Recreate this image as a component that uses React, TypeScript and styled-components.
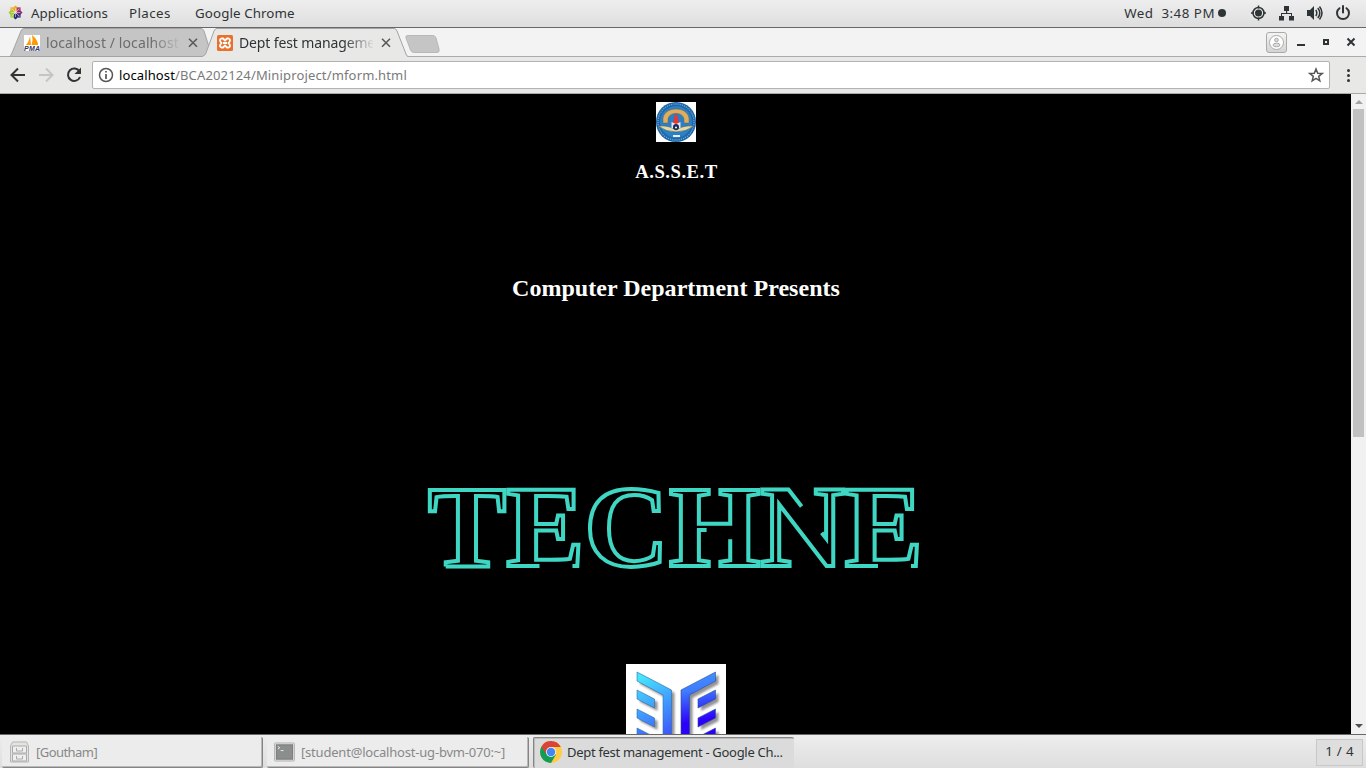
import React from "react";
import styled, { createGlobalStyle } from "styled-components";

const GlobalStyle = createGlobalStyle`
  *{box-sizing:border-box}
  html,body{margin:0;background:#000;overflow:hidden}
  body{font-family:"Noto Sans","Open Sans",sans-serif;color:#2e3436}
  svg{display:block;flex:none}
`;
const Screen = styled.div`width:1366px;height:768px;display:flex;flex-direction:column;overflow:hidden;`;
const Label = styled.span<{ $size?: number; $track?: number; $color?: string }>`
  white-space:pre;font-size:${p => p.$size ?? 13}px;letter-spacing:${p => p.$track ?? 0}px;color:${p => p.$color ?? "#2e3436"};
`;

const TopBar = styled.header`height:28px;flex:none;display:flex;align-items:center;padding:0 15px 2px 8px;background:linear-gradient(#eeeeee,#dedede);border-bottom:1px solid #686868;`;
const Menus = styled.nav`display:flex;align-items:center;margin-left:8px;`;
const MenuItem = styled(Label)<{ $w: number }>`width:${p => p.$w}px;`;
const Status = styled.div`display:flex;align-items:center;margin-left:auto;`;
const Dot = styled.i`width:8px;height:8px;border-radius:50%;background:#2e3436;margin:0 25px 0 3px;`;
const Tray = styled.div`display:flex;align-items:center;gap:12px;`;

const TabStrip = styled.div`height:29px;flex:none;display:flex;background:#f3f3f3;border-bottom:1px solid #aaa;`;
const Tabs = styled.div`display:flex;height:29px;padding-left:9px;`;
const Tab = styled.div<{ $active?: boolean }>`
  position:relative;width:${p => p.$active ? 206 : 200}px;margin-left:${p => p.$active ? -7 : 0}px;height:29px;
  display:flex;align-items:center;padding:1px 0 0 15px;z-index:${p => p.$active ? 2 : 1};
`;
const TabShape = styled.svg`position:absolute;left:0;top:0;z-index:-1;`;
const TabTitle = styled.div`width:134px;margin:0 8px 1px 6px;overflow:hidden;line-height:24px;-webkit-mask-image:linear-gradient(90deg,#000 105px,transparent 136px);`;
const NewTab = styled.svg`margin:7px 0 0 -3px;`;
const WindowButtons = styled.div`display:flex;align-items:center;margin-left:auto;padding-right:10px;`;
const UserButton = styled.div`width:21px;height:21px;border:1px solid #aaa;border-radius:3px;background:linear-gradient(#f4f4f2,#d4d4d0);display:flex;align-items:center;justify-content:center;margin-right:9px;`;

const Toolbar = styled.div`height:37px;flex:none;display:flex;align-items:center;background:#e8e8e7;border-bottom:1px solid #aaa;padding:0 10px 0 9px;`;
const NavButtons = styled.div`display:flex;gap:10px;margin-right:9px;`;
const AddressBar = styled.div`width:1238px;height:28px;display:flex;align-items:center;background:#fff;border:1px solid #b2b2b2;border-radius:2px;padding:0 5px;`;
const Url = styled.div`margin:0 auto 2px 5px;line-height:18px;`;
const Kebab = styled.div`display:flex;flex-direction:column;gap:2px;margin-left:17px;i{width:3px;height:3px;border-radius:50%;background:#333}`;

const Viewport = styled.main`height:640px;flex:none;display:flex;background:#000;`;
const Page = styled.div`width:1351px;height:640px;overflow:hidden;display:flex;flex-direction:column;align-items:center;padding-top:8px;font-family:"Liberation Serif",serif;color:#fff;`;
const Asset = styled.h3`margin:19px 0 0;padding-left:2px;font-size:18.72px;line-height:22px;letter-spacing:.5px;`;
const Presents = styled.h2`margin:91px 0 0;padding-left:1px;font-size:24px;line-height:28px;letter-spacing:.03px;`;
const Title = styled.svg`margin-top:161px;overflow:visible;`;
const Logo = styled.svg`margin-top:81px;`;

const Scrollbar = styled.div`width:15px;background:#f1f1f1;display:flex;flex-direction:column;align-items:center;`;
const Arrow = styled.div<{ $down?: boolean }>`
  height:15px;width:15px;display:flex;align-items:center;justify-content:center;
  &::after{content:"";border:4px solid transparent;border-${p => p.$down ? "top" : "bottom"}-color:${p => p.$down ? "#505050" : "#a3a3a3"};margin-${p => p.$down ? "top" : "bottom"}:${p => p.$down ? 2 : 4}px;}
`;
const Thumb = styled.div`width:11px;height:328px;background:#c1c1c1;margin-bottom:auto;`;

const Taskbar = styled.footer`height:34px;flex:none;display:flex;align-items:center;background:linear-gradient(#ededed,#dedede);border-top:1px solid #686868;padding:1px 3px 0 2px;`;
const Task = styled.div<{ $active?: boolean; $w: number }>`
  width:${p => p.$w}px;height:31px;margin-right:4px;display:flex;align-items:center;gap:${p => p.$active ? 5 : 6}px;
  padding:0 0 ${p => p.$active ? 2 : 0}px ${p => p.$active ? 6 : 7}px;
  background:${p => p.$active ? "#dbdbdb" : "#ececec"};
  border-style:solid;border-width:${p => p.$active ? "1px 0 0 1px" : "0 1px 1px 0"};border-color:#858585;border-radius:2px;
  box-shadow:${p => p.$active ? "inset 1px 1px #bcbcbc" : "inset -1px -1px #b9b9b9"};
`;
const Pager = styled.div`margin-left:auto;width:47px;height:27px;border:1px solid #c8c8c8;background:#dedede;display:flex;align-items:center;justify-content:center;padding-bottom:2px;`;

const CloseIcon = () => <svg width="10" height="10" viewBox="0 0 10 10" stroke="#5a5a5a" strokeWidth="1.6"><path d="M1 .8l8 8M9 .8l-8 8" /></svg>;

function ActivitiesIcon() {
  const colors = ["#efa724", "#932279", "#262577", "#9ccd2a"];
  return <svg width="15" height="15" viewBox="0 0 16 16">
    {[0, 90, 180, 270].map((a, i) => <g key={a} transform={`rotate(${a} 8 8)`} fill={colors[i]}>
      <path d="M8 .5l2 2v3.500L8 7.500 6 6V2.500z" /><path d="M9.500 6.500V2.500H13.500v4z" fill={colors[(i + 1) % 4]} opacity=".85" />
    </g>)}
    <path d="M8 3v10M3 8h10M4 4l8 8M12 4l-8 8" stroke="#eee" strokeWidth=".6" />
  </svg>;
}
function TrayIcons() {
  return <Tray>
    <svg width="16" height="16" viewBox="0 0 16 16"><circle cx="7.500" cy="8" r="5.500" fill="none" stroke="#2e3436" strokeWidth="1.5" /><circle cx="7.500" cy="8" r="3.500" fill="#2e3436" /><path d="M7.500 .5v3M7.500 12.500v3M0 8h3M12 8h3" stroke="#2e3436" strokeWidth="1.500" /></svg>
    <svg width="16" height="16" viewBox="0 0 16 16" fill="#2e3436"><path d="M5 1h5v5H8.200v2H13v3h2v4.500h-5V11h2V9H3v2h2v4.500H0V11h2V8h5V6H5z" /></svg>
    <svg width="16" height="16" viewBox="0 0 16 16"><path d="M0 5h3l4-4v14l-4-4H0z" fill="#2e3436" /><path d="M8.800 5q2 3 0 6M10.800 3q4 5 0 10M12.500 1.500q5 6.500 0 13" fill="none" stroke="#2e3436" strokeWidth="1.500" /></svg>
    <svg width="16" height="16" viewBox="0 0 16 16" fill="none" stroke="#2e3436" strokeWidth="2" strokeLinecap="round"><path d="M8 1v6.500M4.500 3.200a6 6 0 1 0 7 0" /></svg>
  </Tray>;
}
function CollegeEmblem() {
  return <svg width="40" height="40" viewBox="0 0 40 40">
    <rect width="40" height="40" fill="#fff" />
    <circle cx="20" cy="20" r="20" fill="#1b65a8" /><circle cx="20" cy="20" r="18" fill="none" stroke="#6fa9d2" strokeWidth="1.300" strokeDasharray="1.200 1" />
    <circle cx="20" cy="20" r="16" fill="#2b7fc6" />
    <path d="M7 21V16C9 4 31 4 33 16v5h-5v-4C27 9.500 13 9.500 12 17v4z" fill="#dcae62" stroke="#795f3c" strokeWidth=".5" />
    <path d="M2 24q11-1 18 4 7-5 18-4-8 6-18 6T2 24z" fill="#e3d9a2" stroke="#34546b" strokeWidth=".6" />
    <path d="M17 22l1-6 2-5 2 5 1 6z" fill="#e7372f" /><path d="M15.500 20l4.500 2 4.500-2v6h-9z" fill="#e6e6ee" />
    <circle cx="20" cy="25" r="3" fill="#172960" /><circle cx="20" cy="25.500" r="1" fill="#fff" />
    <rect x="17" y="33" width="7" height="2" fill="#e5eef0" />
  </svg>;
}
function TechneLogo() {
  const left = "M11 8L45.500 26V100H37V31L11 17zM11 26l17.500 9v9L11 35zM11 45l17.500 9v9L11 54zM11 64l17.500 9v9L11 73z";
  const right = "M89.500 8L55 26V100h8.500V31l26-14zM89.500 26L72 35v9l17.500-9zM89.500 45L72 54v9l17.500-9zM89.500 64L72 73v9l17.500-9z";
  return <Logo width="100" height="100" viewBox="0 0 100 100">
    <defs>
      <linearGradient id="lg" gradientUnits="userSpaceOnUse" x1="11" y1="15" x2="47" y2="82"><stop stopColor="#45e5ff" /><stop offset="1" stopColor="#3a3cff" /></linearGradient>
      <linearGradient id="rg" gradientUnits="userSpaceOnUse" x1="72" y1="8" x2="80" y2="56"><stop stopColor="#4292ff" /><stop offset=".35" stopColor="#3f7cff" /><stop offset="1" stopColor="#2c00fa" /></linearGradient>
      <filter id="sh"><feGaussianBlur stdDeviation="1" /></filter>
    </defs>
    <rect width="100" height="100" fill="#fff" />
    <g transform="translate(3 3)" fill="#777" opacity=".8" filter="url(#sh)"><path d={left} /><path d={right} /></g>
    <path d={left} fill="url(#lg)" stroke="#326da0" strokeWidth=".6" /><path d={right} fill="url(#rg)" stroke="#294f92" strokeWidth=".6" />
  </Logo>;
}
function ChromeIcon() {
  return <svg width="22" height="22" viewBox="0 0 22 22">
    <circle cx="11" cy="11" r="11" fill="#fc4" />
    <path d="M11 11L1.500 5.500A11 11 0 0 0 11 22l5-8.500z" fill="#119d58" />
    <path d="M11 11v-5h9.800A11 11 0 0 0 1.500 5.500L6.300 13.500z" fill="#da4437" />
    <circle cx="11" cy="11" r="5" fill="#f5f5f5" /><circle cx="11" cy="11" r="4.200" fill="#4285f4" />
  </svg>;
}

export default function App() {
  return <Screen>
    <GlobalStyle />
    <TopBar>
      <ActivitiesIcon />
      <Menus>
        <MenuItem $w={98} $size={13.333} $track={0.03}>Applications</MenuItem>
        <MenuItem $w={66} $size={13.333} $track={0.4}>Places</MenuItem>
        <MenuItem $w={110} $size={13.333} $track={0.1}>Google Chrome</MenuItem>
      </Menus>
      <Status>
        <Label $size={13.333} $track={0.5}>Wed  3:48 PM</Label><Dot />
        <TrayIcons />
      </Status>
    </TopBar>
    <TabStrip>
      <Tabs>
        <Tab>
          <TabShape width="204" height="29" viewBox="0 0 204 29"><path d="M.5 28.500Q2 28 3 25L12 3Q13 .5 15 .5H192Q194 .5 195 3L203 28.500z" fill="#c5c5c5" stroke="#a3a3a3" /></TabShape>
          <svg width="16" height="16" viewBox="0 0 16 16"><rect width="16" height="16" fill="#fff" /><path d="M2 10Q5 7 6 1l1 9zM7.500 10Q9.500 5 8 0q6 5 6 10z" fill="#f90" /><text x="0" y="16" fontSize="7" fontWeight="700" fontStyle="italic" fill="#336" fontFamily="Liberation Sans" textLength="16">PMA</text></svg>
          <TabTitle><Label $size={14} $track={0.1} $color="#6c6c6c">localhost / localhost</Label></TabTitle>
          <CloseIcon />
        </Tab>
        <Tab $active>
          <TabShape width="206" height="29" viewBox="0 0 206 29"><path d="M0 28.500Q3 28 4 25L12 3Q13 .5 15 .5H192Q194 .5 195 3L204 26Q205 28.500 206 28.500V29H0z" fill="#e8e8e7" /><path d="M0 28.500Q3 28 4 25L12 3Q13 .5 15 .5H192Q194 .5 195 3L204 26Q205 28.500 206 28.500" fill="none" stroke="#a3a3a3" /></TabShape>
          <svg width="16" height="16" viewBox="0 0 16 16"><rect width="16" height="16" rx="1.500" fill="#e9712b" /><path d="M4.500 3.500H6L8 5.500l2-2h1.500q2.500 1 1 3.200L11.500 8l1 1.300q1.500 2.200-1 3.200H10l-2-2-2 2H4.500q-2.500-1-1-3.200L4.500 8l-1-1.300q-1.500-2.200 1-3.200zM6 8h4" fill="none" stroke="#fff" strokeWidth="1.800" /></svg>
          <TabTitle><Label $size={14} $track={-0.13}>Dept fest manageme</Label></TabTitle>
          <CloseIcon />
        </Tab>
        <NewTab width="38" height="19" viewBox="0 0 38 19"><path d="M3 .5H28Q30 .5 31 3L34 14Q35 17.500 32 17.500H9Q6.500 17.500 5.500 15L1 3Q0 .5 3 .5z" fill="#c5c5c5" stroke="#b8b8b8" /></NewTab>
      </Tabs>
      <WindowButtons>
        <UserButton><svg width="15" height="15" viewBox="0 0 15 15" fill="#fff" stroke="#aaa"><circle cx="7.500" cy="7.500" r="7" /><circle cx="7.500" cy="5" r="1.800" fill="#ddd" /><ellipse cx="7.500" cy="10" rx="3.500" ry="1.800" fill="#ddd" /></svg></UserButton>
        <svg width="60" height="12" viewBox="0 0 60 12" fill="none" stroke="#2e3436"><path d="M1 9h8" strokeWidth="2" /><path d="M28 4h4v4h-4z" strokeWidth="2" /><path d="M51.500 2.500l7 7M58.500 2.500l-7 7" strokeWidth="2" /></svg>
      </WindowButtons>
    </TabStrip>
    <Toolbar>
      <NavButtons>
        <svg width="18" height="18" viewBox="0 0 18 18" fill="none" stroke="#333" strokeWidth="2"><path d="M16 9H3M9 2.500L2.500 9 9 15.500" /></svg>
        <svg width="18" height="18" viewBox="0 0 18 18" fill="none" stroke="#c5c5c5" strokeWidth="2"><path d="M2 9h13M9 2.500L15.500 9 9 15.500" /></svg>
        <svg width="18" height="18" viewBox="0 0 18 18" fill="none" stroke="#333" strokeWidth="2"><path d="M14.500 5.500A6.200 6.200 0 1 0 15 11" /><path d="M16 1.500V8H9.500z" fill="#333" stroke="none" /></svg>
      </NavButtons>
      <AddressBar>
        <svg width="16" height="16" viewBox="0 0 16 16" fill="none" stroke="#555" strokeWidth="1.500"><circle cx="8" cy="8" r="6.500" /><path d="M8 7v5M8 4v1.600" strokeWidth="1.700" /></svg>
        <Url><Label $track={0.12} $color="#000">localhost</Label><Label $track={0.15} $color="#7a7a7a">/BCA202124/Miniproject/mform.html</Label></Url>
        <svg width="16" height="16" viewBox="0 0 16 16" fill="none" stroke="#555" strokeWidth="1.500"><path d="M8 2l1.700 4.200 4.500.3-3.500 2.900 1.100 4.400L8 11.400l-3.800 2.400 1.100-4.400L1.800 6.500l4.500-.3z" /></svg>
      </AddressBar>
      <Kebab><i /><i /><i /></Kebab>
    </Toolbar>
    <Viewport>
      <Page>
        <CollegeEmblem />
        <Asset>A.S.S.E.T</Asset>
        <Presents>Computer Department Presents</Presents>
        <Title width="495" height="120" viewBox="0 0 495 120" fill="none" stroke="#40d6c4" strokeWidth="4" fontSize="117.2" fontWeight="700">
          <text x="0" y="103" strokeDasharray="450 33">TECHNE</text>
        </Title>
        <TechneLogo />
      </Page>
      <Scrollbar><Arrow /><Thumb /><Arrow $down /></Scrollbar>
    </Viewport>
    <Taskbar>
      <Task $w={261}><svg width="21" height="22" viewBox="0 0 20 22"><path d="M3 1h14l2 4v16H1V5z" fill="#e3e3df" stroke="#b5b5b5" /><path d="M3 5h14v7H3zM3 13h14v7H3z" fill="#eee" stroke="#aaa" /><path d="M7 7v3h6V7M7 15v3h6v-3" fill="none" stroke="#aaa" /></svg><Label $track={-0.55} $color="#888">[Goutham]</Label></Task>
      <Task $w={262}><svg width="21" height="20" viewBox="0 0 22 20"><rect x=".5" y=".5" width="21" height="19" rx="1" fill="#ddd" stroke="#b5b5b5" /><rect x="2.500" y="2.500" width="17" height="15" fill="#8b8e8e" stroke="#777" /><path d="M4 4l2 1.500L4 7M7 8.500h3" fill="none" stroke="#eee" /></svg><Label $track={-0.2} $color="#888">[student@localhost-ug-bvm-070:~]</Label></Task>
      <Task $w={261} $active><ChromeIcon /><Label $track={-0.3}>Dept fest management - Google Ch...</Label></Task>
      <Pager><Label $size={13.333} $track={0.3}>1 / 4</Label></Pager>
    </Taskbar>
  </Screen>;
}
